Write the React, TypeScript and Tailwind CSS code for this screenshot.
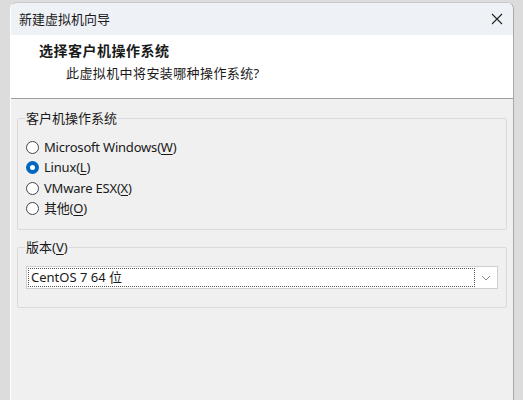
import { useState } from "react";

const font = {
  fontFamily: '"Segoe UI", "Noto Sans", "Noto Sans CJK SC", sans-serif',
};

function Radio({ checked }: { checked: boolean }) {
  return checked ? (
    <span className="inline-flex h-[13px] w-[13px] items-center justify-center rounded-full bg-[#0067c0]">
      <span className="h-[5px] w-[5px] rounded-full bg-white" />
    </span>
  ) : (
    <span className="h-[13px] w-[13px] rounded-full border border-[#444] bg-white" />
  );
}

export default function App() {
  const [os, setOs] = useState("linux");

  const options = [
    { id: "win", label: "Microsoft Windows", key: "W" },
    { id: "linux", label: "Linux", key: "L" },
    { id: "esx", label: "VMware ESX", key: "X" },
    { id: "other", label: "其他", key: "O" },
  ];

  return (
    <div
      className="flex h-[400px] w-[523px] overflow-hidden bg-[#dcdcdc] pl-[10px] pr-[9px] pt-[2px] text-[13px] text-[#1a1a1a]"
      style={font}
    >
      <div className="flex flex-1 flex-col overflow-hidden rounded-t-[7px] border-l border-r border-t border-l-white border-r-[#a8a8a8] border-t-[#c8c8c8] bg-[#f0f0f0]">
        {/* title bar */}
        <div className="flex h-[32px] shrink-0 items-center justify-between bg-[#eef1f6] pl-[8px] pr-[10px]">
          <span className="leading-none">新建虚拟机向导</span>
          <svg width="12" height="12" viewBox="0 0 12 12" className="mb-[1px]">
            <path d="M1 1L11 11M11 1L1 11" stroke="#222" strokeWidth="1.1" fill="none" />
          </svg>
        </div>

        {/* header */}
        <div className="flex h-[64px] shrink-0 flex-col border-b border-[#a0a0a0] bg-white pl-[28px] pt-[6px]">
          <span className="text-[14px] font-bold leading-[20px] tracking-[0.5px]">选择客户机操作系统</span>
          <span className="ml-[27px] mt-[2px] leading-[20px] tracking-[0.4px]">此虚拟机中将安装哪种操作系统?</span>
        </div>

        {/* body */}
        <div className="flex flex-col px-[6px] pt-[10px]">
          <fieldset className="mx-0 rounded-[2px] border border-[#dadada] pb-[10px] pl-[8px] pt-[10px]">
            <legend className="-ml-[1px] px-[1px] leading-[18px]">客户机操作系统</legend>
            <div className="flex flex-col">
              {options.map((o) => (
                <label
                  key={o.id}
                  className="flex h-[20.5px] cursor-default items-center gap-[5px]"
                  onClick={() => setOs(o.id)}
                >
                  <Radio checked={os === o.id} />
                  <span className="leading-none tracking-[-0.2px]">
                    {o.label}(<span className="underline underline-offset-2">{o.key}</span>)
                  </span>
                </label>
              ))}
            </div>
          </fieldset>

          <fieldset className="mt-[8px] rounded-[2px] border border-[#dadada] pb-[18px] pl-[8px] pr-[8px] pt-[10px]">
            <legend className="-ml-[1px] px-[1px] leading-[18px]">
              版本(<span className="underline underline-offset-2">V</span>)
            </legend>
            <div className="flex h-[23px] items-center border border-[#cfcfcf] bg-white p-[1px]">
              <div className="flex h-full flex-1 items-center border border-dotted border-[#555] pl-[2px]">
                CentOS 7 64 位
              </div>
              <div className="flex w-[21px] items-center justify-center">
                <svg width="10" height="6" viewBox="0 0 10 6">
                  <path d="M1 1L5 5L9 1" stroke="#8a8a8a" strokeWidth="1" fill="none" />
                </svg>
              </div>
            </div>
          </fieldset>
        </div>
      </div>
    </div>
  );
}
